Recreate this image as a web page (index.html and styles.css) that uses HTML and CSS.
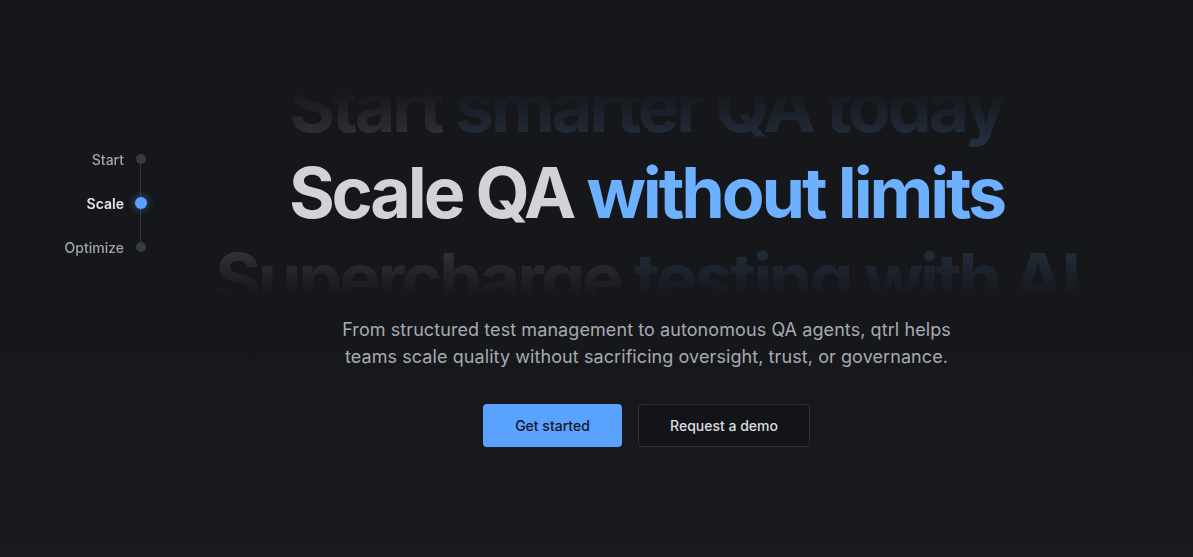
FILE: index.html
```html
<!DOCTYPE html>
<html lang="en">
<head>
<meta charset="utf-8">
<title>qtrl</title>
<link rel="stylesheet" href="styles.css">
</head>
<body>
<nav class="steps">
  <div class="step"><span class="step-label">Start</span><span class="step-dot"></span></div>
  <div class="step step-active"><span class="step-label">Scale</span><span class="step-dot"></span></div>
  <div class="step"><span class="step-label">Optimize</span><span class="step-dot"></span></div>
</nav>
<main class="main">
  <section class="hero">
    <div class="roller">
      <div class="line line-dim"><span class="gray">Start</span> <span class="blue">smarter QA today</span></div>
      <h1 class="line"><span class="gray">Scale QA</span> <span class="blue">without limits</span></h1>
      <div class="line line-dim"><span class="gray">Supercharge</span> <span class="blue">testing with AI</span></div>
    </div>
    <p class="lead">From structured test management to autonomous QA agents, qtrl helps teams scale quality without sacrificing oversight, trust, or governance.</p>
    <div class="actions">
      <a class="btn btn-primary" href="#">Get started</a>
      <a class="btn btn-ghost" href="#">Request a demo</a>
    </div>
  </section>
</main>
</body>
</html>
```
FILE: styles.css
```css
* { box-sizing: border-box; }
html, body { margin: 0; height: 100%; }
body {
  background: linear-gradient(to bottom, #16171b 0%, #16171b 55%, #191a1e 100%);
  font-family: Inter, "Noto Sans", sans-serif;
  color: #d1d3d9;
  min-height: 557px;
}
.steps {
  position: fixed;
  top: 144px;
  left: 0;
  width: 147px;
  display: flex;
  flex-direction: column;
  gap: 14px;
}
.steps::before {
  content: "";
  position: absolute;
  right: 6px;
  top: 15px;
  bottom: 15px;
  width: 1px;
  background: #34363c;
}
.step {
  height: 30px;
  display: flex;
  align-items: center;
  justify-content: flex-end;
  gap: 11px;
  position: relative;
}
.step-label {
  font-size: 14px;
  font-weight: 500;
  color: #a0a3ab;
}
.step-dot {
  width: 12px;
  height: 12px;
  display: flex;
  align-items: center;
  justify-content: center;
}
.step-dot::after {
  content: "";
  width: 10px;
  height: 10px;
  border-radius: 50%;
  background: #383a41;
}
.step-active .step-label { color: #e4e6ea; font-weight: 600; }
.step-active .step-dot::after {
  width: 12px;
  height: 12px;
  background: #5aa2ff;
  box-shadow: 0 0 8px rgba(90, 162, 255, 0.55);
}
.main {
  padding-left: 100px;
}
.hero {
  padding-top: 90px;
  display: flex;
  flex-direction: column;
  align-items: center;
  text-align: center;
}
.roller {
  height: 206px;
  width: 100%;
  overflow: hidden;
  display: flex;
  flex-direction: column;
  justify-content: center;
  align-items: center;
  -webkit-mask-image: linear-gradient(to bottom, transparent 0%, #000 32%, #000 70%, transparent 100%);
  mask-image: linear-gradient(to bottom, transparent 0%, #000 32%, #000 70%, transparent 100%);
}
.line {
  margin: 0;
  flex: none;
  font-size: 70px;
  line-height: 86px;
  font-weight: 700;
  letter-spacing: -0.045em;
  white-space: nowrap;
}
.gray { color: #d1d3d9; }
.blue { color: #6cb0ff; }
.line-dim { opacity: 0.2; }
.lead {
  margin: 20px 0 0;
  font-size: 18px;
  line-height: 27px;
  letter-spacing: 0.08px;
  color: #a6aab2;
  max-width: 640px;
}
.actions {
  margin-top: 34px;
  display: flex;
  gap: 16px;
}
.btn {
  height: 43px;
  display: flex;
  align-items: center;
  justify-content: center;
  border-radius: 4px;
  font-size: 14px;
  font-weight: 500;
  text-decoration: none;
}
.btn-primary {
  width: 139px;
  background: #5aa2ff;
  color: #15181e;
}
.btn-ghost {
  width: 172px;
  background: #131418;
  border: 1px solid #2e3036;
  color: #dcdee3;
}
```
